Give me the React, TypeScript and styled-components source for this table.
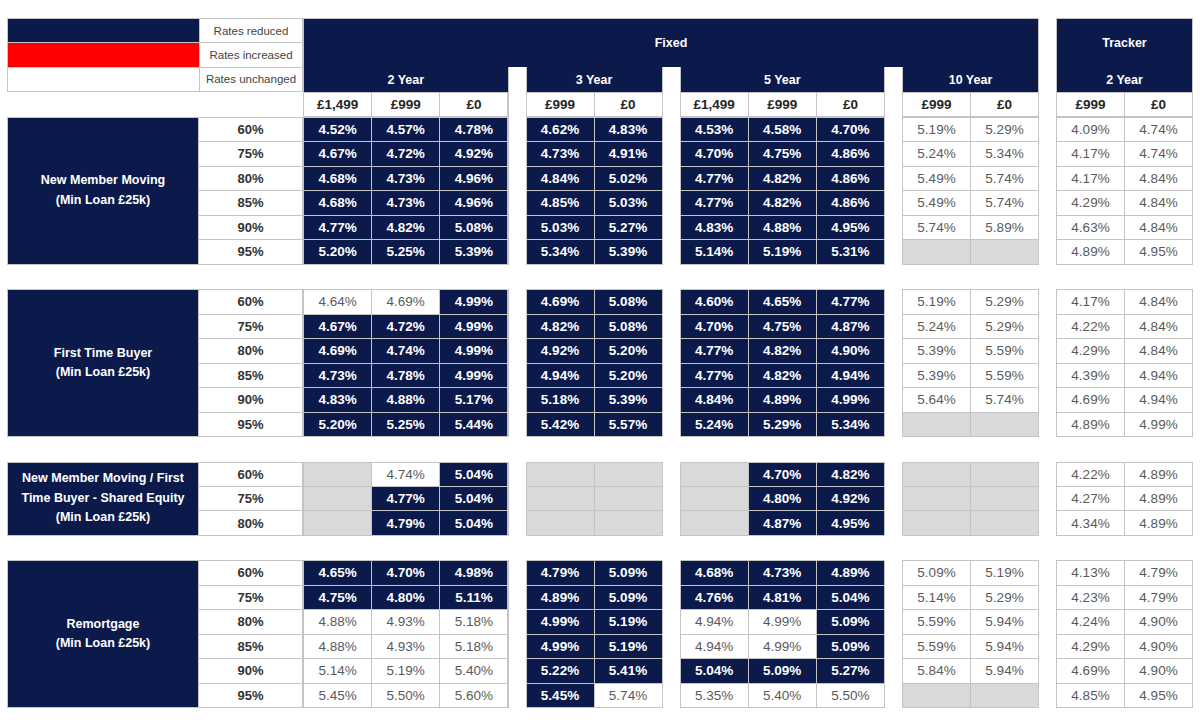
import React from "react";
import styled, { createGlobalStyle } from "styled-components";

const NAVY = "#0c1a4b";
const LINE = "#c4c4c4";
const ROW = 24.67;
const COL = 68.5;
const GAP = 17;

const GlobalStyle = createGlobalStyle`
  html, body {
    margin: 0;
    background: #fff;
    font-family: "Liberation Sans", Arial, sans-serif;
  }
`;

const Page = styled.div`
  display: flex;
  flex-direction: column;
  padding: 18px 0 0 7px;
  width: 1200px;
  box-sizing: border-box;
`;

const HeaderRow = styled.div`
  display: flex;
  gap: ${GAP}px;
  align-items: flex-start;
`;

const LeftHead = styled.div`
  display: flex;
  flex-direction: column;
  width: 296px;
  margin-right: -${GAP}px;
`;

const Legend = styled.div`
  display: grid;
  grid-template-columns: 191px 1fr;
  grid-template-rows: repeat(3, 1fr);
  height: ${ROW * 3}px;
  gap: 1px;
  background: ${LINE};
  border: 1px solid ${LINE};
  box-sizing: border-box;
`;

const Swatch = styled.div<{ $color: string }>`
  background: ${(p) => p.$color};
`;

const LegendLabel = styled.div`
  background: #fff;
  display: flex;
  align-items: center;
  justify-content: center;
  font-size: 11.5px;
  color: #444;
`;

const Band = styled.div<{ $width: number }>`
  display: flex;
  flex-direction: column;
  width: ${(p) => p.$width}px;
`;

const BandTitle = styled.div`
  height: ${ROW * 2}px;
  background: ${NAVY};
  border: 1px solid ${LINE};
  border-bottom: none;
  box-sizing: border-box;
  color: #fff;
  font-weight: bold;
  font-size: 12.5px;
  display: flex;
  align-items: center;
  justify-content: center;
`;

const YearRow = styled.div`
  display: flex;
  gap: ${GAP}px;
`;

const YearGroup = styled.div<{ $cols: number }>`
  display: flex;
  flex-direction: column;
  width: ${(p) => p.$cols * COL}px;
`;

const YearTitle = styled.div`
  height: ${ROW}px;
  background: ${NAVY};
  border: 1px solid ${LINE};
  border-top: none;
  border-bottom: none;
  box-sizing: border-box;
  color: #fff;
  font-weight: bold;
  font-size: 12.5px;
  display: flex;
  align-items: center;
  justify-content: center;
`;

const Grid = styled.div<{ $cols: number; $rows: number }>`
  display: grid;
  grid-template-columns: repeat(${(p) => p.$cols}, 1fr);
  grid-template-rows: repeat(${(p) => p.$rows}, 1fr);
  width: ${(p) => p.$cols * COL}px;
  height: ${(p) => p.$rows * ROW}px;
  gap: 1px;
  background: ${LINE};
  border: 1px solid ${LINE};
  box-sizing: border-box;
`;

const FeeCell = styled.div`
  background: #fff;
  display: flex;
  align-items: center;
  justify-content: center;
  font-weight: bold;
  font-size: 13.5px;
  color: #262626;
`;

const Section = styled.div`
  display: flex;
  gap: ${GAP}px;
  margin-top: 24.5px;
  &:first-of-type {
    margin-top: 0;
  }
`;

const Lead = styled.div`
  display: flex;
  width: 296px;
  margin-right: -${GAP}px;
`;

const Category = styled.div<{ $rows: number }>`
  width: 191px;
  height: ${(p) => p.$rows * ROW}px;
  background: ${NAVY};
  border: 1px solid ${LINE};
  border-right: none;
  box-sizing: border-box;
  display: flex;
  align-items: center;
  justify-content: center;
  text-align: center;
  color: #fff;
  font-weight: bold;
  font-size: 12.5px;
  line-height: 19.5px;
  padding: 0 6px;
`;

const LtvCol = styled.div<{ $rows: number }>`
  flex: 1;
  display: grid;
  grid-template-rows: repeat(${(p) => p.$rows}, 1fr);
  height: ${(p) => p.$rows * ROW}px;
  gap: 1px;
  background: ${LINE};
  border: 1px solid ${LINE};
  box-sizing: border-box;
`;

const LtvCell = styled.div`
  background: #fff;
  display: flex;
  align-items: center;
  justify-content: center;
  font-weight: bold;
  font-size: 13px;
  color: #333;
`;

type Kind = "dark" | "plain" | "none";

const RateCell = styled.div<{ $kind: Kind }>`
  background: ${(p) => (p.$kind === "dark" ? NAVY : p.$kind === "none" ? "#d9d9d9" : "#fff")};
  color: ${(p) => (p.$kind === "dark" ? "#fff" : "#5a5a5a")};
  font-weight: ${(p) => (p.$kind === "dark" ? "bold" : "normal")};
  font-size: 13.5px;
  display: flex;
  align-items: center;
  justify-content: center;
`;

const groups = [
  { year: "2 Year", fees: ["£1,499", "£999", "£0"] },
  { year: "3 Year", fees: ["£999", "£0"] },
  { year: "5 Year", fees: ["£1,499", "£999", "£0"] },
  { year: "10 Year", fees: ["£999", "£0"] },
];
const tracker = { year: "2 Year", fees: ["£999", "£0"] };

// "*" marks a reduced rate, "-" an unavailable product
type SectionData = { title: string[]; ltv: string[]; blocks: string[][][] };

const sections: SectionData[] = [
  {
    title: ["New Member Moving", "(Min Loan £25k)"],
    ltv: ["60%", "75%", "80%", "85%", "90%", "95%"],
    blocks: [
      [
        ["*4.52", "*4.57", "*4.78"],
        ["*4.67", "*4.72", "*4.92"],
        ["*4.68", "*4.73", "*4.96"],
        ["*4.68", "*4.73", "*4.96"],
        ["*4.77", "*4.82", "*5.08"],
        ["*5.20", "*5.25", "*5.39"],
      ],
      [
        ["*4.62", "*4.83"],
        ["*4.73", "*4.91"],
        ["*4.84", "*5.02"],
        ["*4.85", "*5.03"],
        ["*5.03", "*5.27"],
        ["*5.34", "*5.39"],
      ],
      [
        ["*4.53", "*4.58", "*4.70"],
        ["*4.70", "*4.75", "*4.86"],
        ["*4.77", "*4.82", "*4.86"],
        ["*4.77", "*4.82", "*4.86"],
        ["*4.83", "*4.88", "*4.95"],
        ["*5.14", "*5.19", "*5.31"],
      ],
      [
        ["5.19", "5.29"],
        ["5.24", "5.34"],
        ["5.49", "5.74"],
        ["5.49", "5.74"],
        ["5.74", "5.89"],
        ["-", "-"],
      ],
      [
        ["4.09", "4.74"],
        ["4.17", "4.74"],
        ["4.17", "4.84"],
        ["4.29", "4.84"],
        ["4.63", "4.84"],
        ["4.89", "4.95"],
      ],
    ],
  },
  {
    title: ["First Time Buyer", "(Min Loan £25k)"],
    ltv: ["60%", "75%", "80%", "85%", "90%", "95%"],
    blocks: [
      [
        ["4.64", "4.69", "*4.99"],
        ["*4.67", "*4.72", "*4.99"],
        ["*4.69", "*4.74", "*4.99"],
        ["*4.73", "*4.78", "*4.99"],
        ["*4.83", "*4.88", "*5.17"],
        ["*5.20", "*5.25", "*5.44"],
      ],
      [
        ["*4.69", "*5.08"],
        ["*4.82", "*5.08"],
        ["*4.92", "*5.20"],
        ["*4.94", "*5.20"],
        ["*5.18", "*5.39"],
        ["*5.42", "*5.57"],
      ],
      [
        ["*4.60", "*4.65", "*4.77"],
        ["*4.70", "*4.75", "*4.87"],
        ["*4.77", "*4.82", "*4.90"],
        ["*4.77", "*4.82", "*4.94"],
        ["*4.84", "*4.89", "*4.99"],
        ["*5.24", "*5.29", "*5.34"],
      ],
      [
        ["5.19", "5.29"],
        ["5.24", "5.29"],
        ["5.39", "5.59"],
        ["5.39", "5.59"],
        ["5.64", "5.74"],
        ["-", "-"],
      ],
      [
        ["4.17", "4.84"],
        ["4.22", "4.84"],
        ["4.29", "4.84"],
        ["4.39", "4.94"],
        ["4.69", "4.94"],
        ["4.89", "4.99"],
      ],
    ],
  },
  {
    title: ["New Member Moving / First", "Time Buyer - Shared Equity", "(Min Loan £25k)"],
    ltv: ["60%", "75%", "80%"],
    blocks: [
      [
        ["-", "4.74", "*5.04"],
        ["-", "*4.77", "*5.04"],
        ["-", "*4.79", "*5.04"],
      ],
      [
        ["-", "-"],
        ["-", "-"],
        ["-", "-"],
      ],
      [
        ["-", "*4.70", "*4.82"],
        ["-", "*4.80", "*4.92"],
        ["-", "*4.87", "*4.95"],
      ],
      [
        ["-", "-"],
        ["-", "-"],
        ["-", "-"],
      ],
      [
        ["4.22", "4.89"],
        ["4.27", "4.89"],
        ["4.34", "4.89"],
      ],
    ],
  },
  {
    title: ["Remortgage", "(Min Loan £25k)"],
    ltv: ["60%", "75%", "80%", "85%", "90%", "95%"],
    blocks: [
      [
        ["*4.65", "*4.70", "*4.98"],
        ["*4.75", "*4.80", "*5.11"],
        ["4.88", "4.93", "5.18"],
        ["4.88", "4.93", "5.18"],
        ["5.14", "5.19", "5.40"],
        ["5.45", "5.50", "5.60"],
      ],
      [
        ["*4.79", "*5.09"],
        ["*4.89", "*5.09"],
        ["*4.99", "*5.19"],
        ["*4.99", "*5.19"],
        ["*5.22", "*5.41"],
        ["*5.45", "5.74"],
      ],
      [
        ["*4.68", "*4.73", "*4.89"],
        ["*4.76", "*4.81", "*5.04"],
        ["4.94", "4.99", "*5.09"],
        ["4.94", "4.99", "*5.09"],
        ["*5.04", "*5.09", "*5.27"],
        ["5.35", "5.40", "5.50"],
      ],
      [
        ["5.09", "5.19"],
        ["5.14", "5.29"],
        ["5.59", "5.94"],
        ["5.59", "5.94"],
        ["5.84", "5.94"],
        ["-", "-"],
      ],
      [
        ["4.13", "4.79"],
        ["4.23", "4.79"],
        ["4.24", "4.90"],
        ["4.29", "4.90"],
        ["4.69", "4.90"],
        ["4.85", "4.95"],
      ],
    ],
  },
];

const parse = (v: string): { kind: Kind; text: string } => {
  if (v === "-") return { kind: "none", text: "" };
  if (v.startsWith("*")) return { kind: "dark", text: v.slice(1) + "%" };
  return { kind: "plain", text: v + "%" };
};

const fixedWidth = groups.reduce((w, g) => w + g.fees.length * COL, 0) + GAP * (groups.length - 1);

const Year: React.FC<{ year: string; fees: string[] }> = ({ year, fees }) => (
  <YearGroup $cols={fees.length}>
    <YearTitle>{year}</YearTitle>
    <Grid $cols={fees.length} $rows={1}>
      {fees.map((f, i) => (
        <FeeCell key={i}>{f}</FeeCell>
      ))}
    </Grid>
  </YearGroup>
);

const RateBlock: React.FC<{ rows: string[][] }> = ({ rows }) => (
  <Grid $cols={rows[0].length} $rows={rows.length}>
    {rows.flat().map((v, i) => {
      const c = parse(v);
      return (
        <RateCell key={i} $kind={c.kind}>
          {c.text}
        </RateCell>
      );
    })}
  </Grid>
);

export default function App() {
  return (
    <>
      <GlobalStyle />
      <Page>
        <HeaderRow>
          <LeftHead>
            <Legend>
              <Swatch $color={NAVY} />
              <LegendLabel>Rates reduced</LegendLabel>
              <Swatch $color="#ff0000" />
              <LegendLabel>Rates increased</LegendLabel>
              <Swatch $color="#fff" />
              <LegendLabel>Rates unchanged</LegendLabel>
            </Legend>
          </LeftHead>
          <Band $width={fixedWidth}>
            <BandTitle>Fixed</BandTitle>
            <YearRow>
              {groups.map((g) => (
                <Year key={g.year} year={g.year} fees={g.fees} />
              ))}
            </YearRow>
          </Band>
          <Band $width={tracker.fees.length * COL}>
            <BandTitle>Tracker</BandTitle>
            <Year year={tracker.year} fees={tracker.fees} />
          </Band>
        </HeaderRow>
        <div>
          {sections.map((s, si) => (
            <Section key={si}>
              <Lead>
                <Category $rows={s.ltv.length}>
                  <div>
                    {s.title.map((t, i) => (
                      <div key={i}>{t}</div>
                    ))}
                  </div>
                </Category>
                <LtvCol $rows={s.ltv.length}>
                  {s.ltv.map((l) => (
                    <LtvCell key={l}>{l}</LtvCell>
                  ))}
                </LtvCol>
              </Lead>
              {s.blocks.map((b, bi) => (
                <RateBlock key={bi} rows={b} />
              ))}
            </Section>
          ))}
        </div>
      </Page>
    </>
  );
}
